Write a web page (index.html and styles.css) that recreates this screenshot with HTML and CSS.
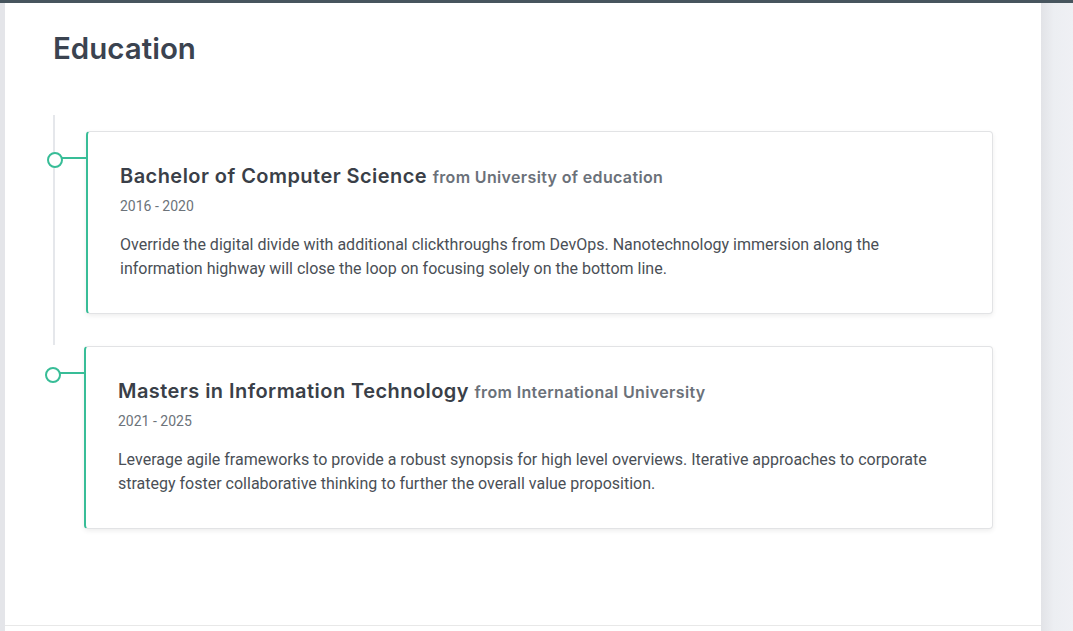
FILE: index.html
```html
<!DOCTYPE html>
<html lang="en">
<head>
<meta charset="utf-8">
<title>Education</title>
<link rel="stylesheet" href="styles.css">
</head>
<body>
<div class="topbar"></div>
<div class="layout">
  <div class="gutter-left"></div>
  <main class="panel">
    <section class="section">
      <h2 class="section-title">Education</h2>
      <ul class="timeline">
        <li class="timeline-item">
          <div class="card">
            <h3 class="card-title">Bachelor of Computer Science <span class="card-sub">from University of education</span></h3>
            <div class="card-date">2016 - 2020</div>
            <p class="card-text">Override the digital divide with additional clickthroughs from DevOps. Nanotechnology immersion along the information highway will close the loop on focusing solely on the bottom line.</p>
          </div>
        </li>
        <li class="timeline-item">
          <div class="card">
            <h3 class="card-title">Masters in Information Technology <span class="card-sub">from International University</span></h3>
            <div class="card-date">2021 - 2025</div>
            <p class="card-text">Leverage agile frameworks to provide a robust synopsis for high level overviews. Iterative approaches to corporate strategy foster collaborative thinking to further the overall value proposition.</p>
          </div>
        </li>
      </ul>
    </section>
    <div class="panel-footer"></div>
  </main>
  <div class="gutter-right"></div>
</div>
</body>
</html>
```
FILE: styles.css
```css
* { box-sizing: border-box; }
html, body { margin: 0; padding: 0; }
body {
  width: 1073px;
  height: 631px;
  overflow: hidden;
  background: #ffffff;
  font-family: Roboto, "Liberation Sans", sans-serif;
}
.topbar {
  height: 3px;
  background: #47555e;
}
.layout {
  display: flex;
  height: 628px;
}
.gutter-left {
  width: 5px;
  background: #e4e5e9;
}
.gutter-right {
  width: 32px;
  background: linear-gradient(to right, #e2e3e7, #eceef2 40%, #eff0f4);
}
.panel {
  width: 1036px;
  display: flex;
  flex-direction: column;
  background: #ffffff;
}
.section {
  height: 622px;
  padding: 27px 48px 0 48px;
}
.panel-footer {
  border-top: 1px solid #e8e8e8;
  flex: 1;
}
.section-title {
  margin: 0;
  font-family: Inter, "Noto Sans", sans-serif;
  font-weight: 600;
  font-size: 29.5px;
  line-height: 36px;
  color: #3b4350;
}
.timeline {
  list-style: none;
  margin: 49px 0 0 0;
  padding: 0;
}
.timeline-item {
  border-left: 2px solid #e5e7eb;
  padding: 16px 0 31px 31px;
}
.timeline-item:last-child {
  border-left: none;
  padding-top: 1px;
  padding-bottom: 0;
}
.card {
  position: relative;
  background: #fff;
  border: 1px solid #e2e3e5;
  border-left: 2px solid #38bd97;
  border-radius: 4px;
  box-shadow: 0 2px 5px rgba(0, 0, 0, 0.07);
  padding: 32px;
}
.card::before {
  content: "";
  position: absolute;
  left: -33px;
  top: 25px;
  width: 33px;
  height: 2px;
  background: #38bd97;
}
.card::after {
  content: "";
  position: absolute;
  left: -41px;
  top: 20px;
  width: 12px;
  height: 12px;
  border: 2px solid #38bd97;
  border-radius: 50%;
  background: #fff;
}
.card-title {
  margin: 0;
  height: 24px;
  font-family: Inter, "Noto Sans", sans-serif;
  font-weight: 600;
  font-size: 20px;
  line-height: 24px;
  letter-spacing: 0.45px;
  color: #3a3f48;
}
.card-sub {
  font-size: 16px;
  line-height: 1;
  font-weight: 600;
  letter-spacing: 0.35px;
  color: #6b7179;
}
.card-date {
  margin-top: 8px;
  font-size: 14px;
  line-height: 20px;
  color: #6c737a;
}
.card-text {
  margin: 17px 0 0 0;
  font-size: 16px;
  line-height: 24px;
  color: #4a4f56;
}
```
